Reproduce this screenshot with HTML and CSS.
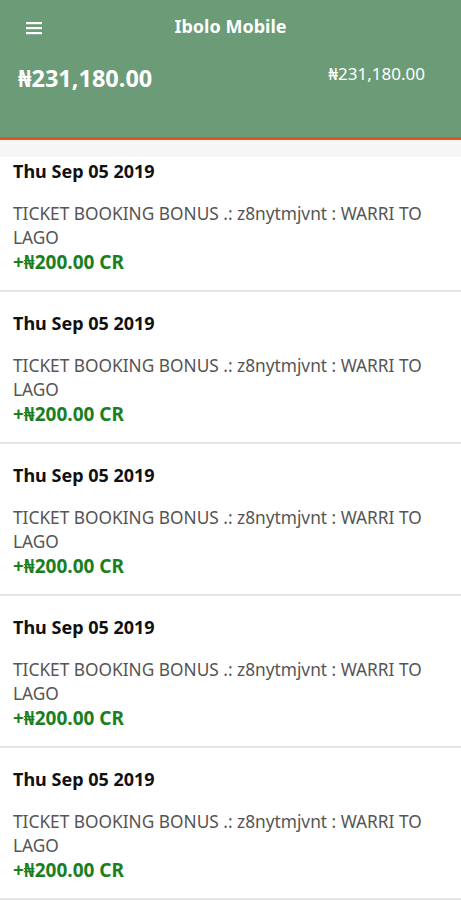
FILE: index.html
```html
<!DOCTYPE html>
<html lang="en">
<head>
    <meta charset="UTF-8">
    <meta name="viewport" content="width=device-width, initial-scale=1.0">
    <title>Ibolo Mobile</title>
    <link rel="stylesheet" href="styles.css">
</head>
<body>

<header class="top-bar">
    <div class="title-row">
        <button class="menu-btn" aria-label="Menu">
            <svg width="16" height="14" viewBox="0 0 16 14">
                <rect x="0" y="1" width="16" height="2.2" fill="#fff"/>
                <rect x="0" y="6" width="16" height="2.2" fill="#fff"/>
                <rect x="0" y="11" width="16" height="2.2" fill="#fff"/>
            </svg>
        </button>
        <h1 class="app-title">Ibolo Mobile</h1>
    </div>
    <div class="balance-row">
        <span class="balance-main">₦231,180.00</span>
        <span class="balance-side">₦231,180.00</span>
    </div>
</header>

<ul class="tx-list">
    <li class="tx">
        <div class="tx-date">Thu Sep 05 2019</div>
        <div class="tx-desc">TICKET BOOKING BONUS .: z8nytmjvnt : WARRI TO LAGO</div>
        <div class="tx-amount">+₦200.00 CR</div>
    </li>
    <li class="tx">
        <div class="tx-date">Thu Sep 05 2019</div>
        <div class="tx-desc">TICKET BOOKING BONUS .: z8nytmjvnt : WARRI TO LAGO</div>
        <div class="tx-amount">+₦200.00 CR</div>
    </li>
    <li class="tx">
        <div class="tx-date">Thu Sep 05 2019</div>
        <div class="tx-desc">TICKET BOOKING BONUS .: z8nytmjvnt : WARRI TO LAGO</div>
        <div class="tx-amount">+₦200.00 CR</div>
    </li>
    <li class="tx">
        <div class="tx-date">Thu Sep 05 2019</div>
        <div class="tx-desc">TICKET BOOKING BONUS .: z8nytmjvnt : WARRI TO LAGO</div>
        <div class="tx-amount">+₦200.00 CR</div>
    </li>
    <li class="tx">
        <div class="tx-date">Thu Sep 05 2019</div>
        <div class="tx-desc">TICKET BOOKING BONUS .: z8nytmjvnt : WARRI TO LAGO</div>
        <div class="tx-amount">+₦200.00 CR</div>
    </li>
</ul>

</body>
</html>
```

FILE: styles.css
```css
body {
    margin: 0;
    background-color: #FFFFFF;
    font-family: "Noto Sans", "Open Sans", sans-serif;
    overflow: hidden;
}

.top-bar {
    background-color: #6B9C77;
    height: 137px;
    border-bottom: 3px solid #E9521F;
    color: #FFFFFF;
    box-sizing: content-box;
}

.title-row {
    display: flex;
    align-items: center;
    height: 56px;
    position: relative;
}

.menu-btn {
    background: none;
    border: none;
    padding: 0;
    margin-left: 26px;
    display: flex;
}

.app-title {
    position: absolute;
    left: 0;
    right: 0;
    top: 14px;
    margin: 0;
    text-align: center;
    font-size: 18px;
    font-weight: 700;
    line-height: 24px;
    pointer-events: none;
}

.balance-row {
    display: flex;
    justify-content: space-between;
    align-items: flex-start;
    padding: 6px 36px 0 18px;
}

.balance-main {
    font-size: 23.5px;
    font-weight: 700;
    line-height: 32px;
}

.balance-side {
    font-size: 17px;
    line-height: 24px;
}

.tx-list {
    list-style-type: none;
    margin: 0;
    padding: 0;
    background: linear-gradient(#F6F6F6 0, #F6F6F6 17px, #FFFFFF 17px);
}

.tx {
    padding: 19px 13px 16px;
    border-bottom: 2px solid #E6E6E6;
}

.tx-date {
    color: #111111;
    font-size: 18px;
    font-weight: 700;
    line-height: 24px;
    margin-bottom: 19px;
}

.tx-desc {
    color: #555555;
    font-size: 17.3px;
    line-height: 24px;
    padding-right: 20px;
}

.tx-amount {
    color: #1B7F1F;
    font-size: 19px;
    font-weight: 700;
    line-height: 24px;
}
```
